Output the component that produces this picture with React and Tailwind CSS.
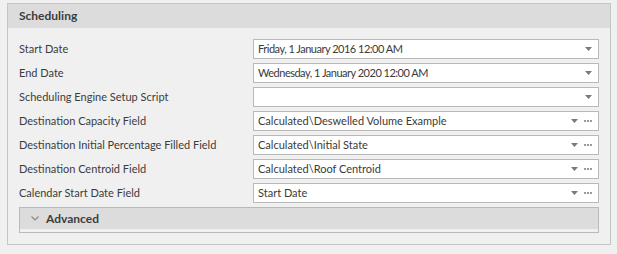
import React from 'react';

const rows = [
    { label: 'Start Date', value: 'Friday, 1 January 2016 12:00 AM', date: true },
    { label: 'End Date', value: 'Wednesday, 1 January 2020 12:00 AM', date: true },
    { label: 'Scheduling Engine Setup Script', value: '' },
    { label: 'Destination Capacity Field', value: 'Calculated\\Deswelled Volume Example', more: true },
    { label: 'Destination Initial Percentage Filled Field', value: 'Calculated\\Initial State', more: true },
    { label: 'Destination Centroid Field', value: 'Calculated\\Roof Centroid', more: true },
    { label: 'Calendar Start Date Field', value: 'Start Date', more: true },
];

function DropArrow() {
    return (
        <svg width="7" height="4" viewBox="0 0 7 4" className="shrink-0">
            <path d="M0 0h7L3.5 4z" fill="#7a7a7a" />
        </svg>
    );
}

function Dots() {
    return (
        <svg width="8" height="2" viewBox="0 0 8 2" className="ml-[6px] shrink-0">
            <rect x="0" y="0" width="2" height="2" fill="#9a9a9a" />
            <rect x="3" y="0" width="2" height="2" fill="#9a9a9a" />
            <rect x="6" y="0" width="2" height="2" fill="#9a9a9a" />
        </svg>
    );
}

function Field({ value, more, date }) {
    return (
        <div className="w-[346px] h-[20px] bg-white border border-[#b9b9b9] flex items-center pl-[4px] pr-[6px]">
            <span className={date ? 'flex-1 truncate text-[#3a3a3a] tracking-[-0.5px]' : 'flex-1 truncate text-[#3a3a3a]'}>{value}</span>
            <DropArrow />
            {more && <Dots />}
        </div>
    );
}

export default function App() {
    return (
        <div className="w-[617px] h-[254px] bg-[#f0f0f0] pt-[3px] pl-[7px] text-[11px]" style={{ fontFamily: 'Lato, "Liberation Sans", sans-serif' }}>
            <div className="w-[604px] h-[242px] border border-[#c4c4c4]">
                <div className="h-[24px] bg-[#dcdcdc] flex items-center pl-[11px] font-bold text-[12px] text-[#3c3c3c]">
                    Scheduling
                </div>
                <div className="pt-[11px] pl-[11px] flex flex-col gap-[4px]">
                    {rows.map(r => (
                        <div key={r.label} className="flex items-center h-[20px]">
                            <div className="w-[234px] text-[#3c3c3c] truncate">{r.label}</div>
                            <Field value={r.value} more={r.more} date={r.date} />
                        </div>
                    ))}
                    <div className="w-[580px] h-[26px] border border-[#b9b9b9] bg-[#f0f0f0]">
                        <div className="h-[21px] bg-[#dcdcdc] flex items-center pl-[11px] gap-[7px] font-bold text-[12px] text-[#3c3c3c]">
                            <svg width="8" height="5" viewBox="0 0 8 5">
                                <path d="M0.5 0.5L4 4L7.5 0.5" fill="none" stroke="#8a8a8a" strokeWidth="1.2" />
                            </svg>
                            Advanced
                        </div>
                    </div>
                </div>
            </div>
        </div>
    );
}
